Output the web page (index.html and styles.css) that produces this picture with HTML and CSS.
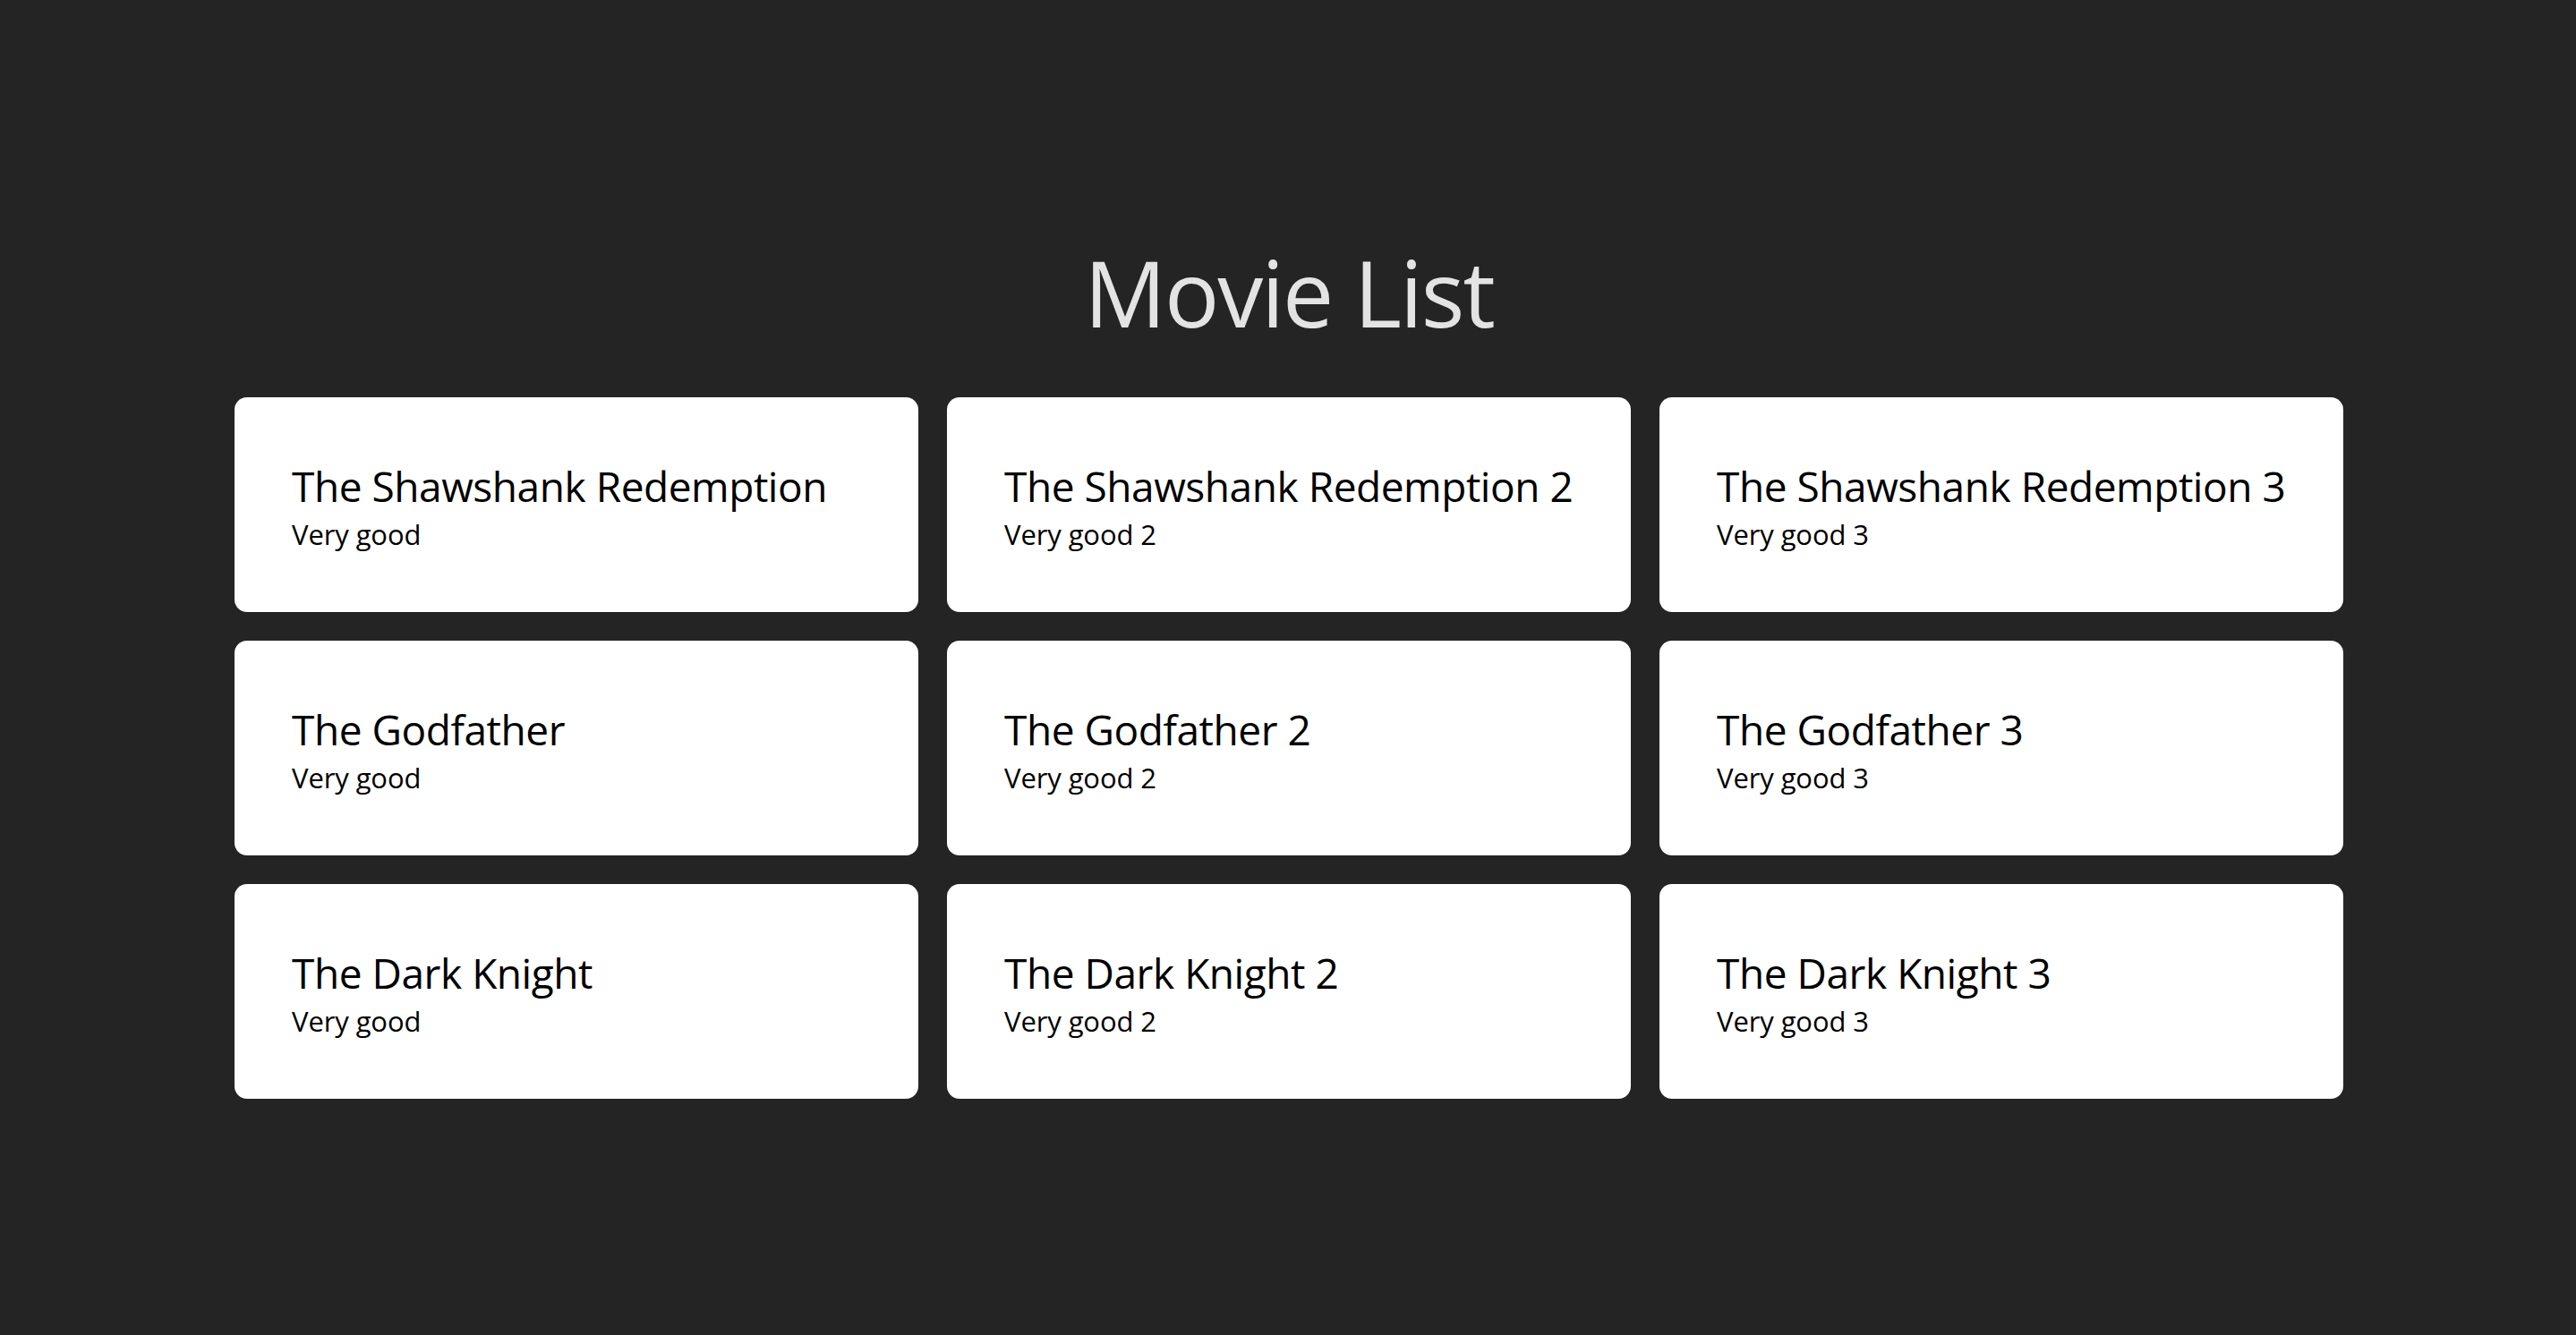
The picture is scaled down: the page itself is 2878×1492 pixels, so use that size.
FILE: index.html
```html
<!DOCTYPE html>
<html lang="en">
<head>
<meta charset="utf-8">
<title>Movie List</title>
<link rel="stylesheet" href="styles.css">
</head>
<body>
<main class="page">
  <h1 class="page-title">Movie List</h1>
  <ul class="movie-grid">
    <li class="movie-card"><h2 class="movie-title">The Shawshank Redemption</h2><p class="movie-desc">Very good</p></li>
    <li class="movie-card"><h2 class="movie-title">The Shawshank Redemption 2</h2><p class="movie-desc">Very good 2</p></li>
    <li class="movie-card"><h2 class="movie-title">The Shawshank Redemption 3</h2><p class="movie-desc">Very good 3</p></li>
    <li class="movie-card"><h2 class="movie-title">The Godfather</h2><p class="movie-desc">Very good</p></li>
    <li class="movie-card"><h2 class="movie-title">The Godfather 2</h2><p class="movie-desc">Very good 2</p></li>
    <li class="movie-card"><h2 class="movie-title">The Godfather 3</h2><p class="movie-desc">Very good 3</p></li>
    <li class="movie-card"><h2 class="movie-title">The Dark Knight</h2><p class="movie-desc">Very good</p></li>
    <li class="movie-card"><h2 class="movie-title">The Dark Knight 2</h2><p class="movie-desc">Very good 2</p></li>
    <li class="movie-card"><h2 class="movie-title">The Dark Knight 3</h2><p class="movie-desc">Very good 3</p></li>
  </ul>
</main>
</body>
</html>
```
FILE: styles.css
```css
html, body {
  margin: 0;
  padding: 0;
}

body {
  background: #242424;
  color: rgba(255, 255, 255, 0.87);
  font-family: "Open Sans", "Noto Sans", sans-serif;
  min-height: 100vh;
}

.page {
  display: flex;
  flex-direction: column;
  align-items: center;
  padding-top: 270px;
  padding-left: 2px;
}

.page-title {
  margin: 0 0 60px;
  font-size: 102px;
  line-height: 114px;
  font-weight: 400;
  letter-spacing: -2px;
  color: #e3e3e3;
}

.movie-grid {
  list-style: none;
  margin: 0;
  padding: 0;
  display: grid;
  grid-template-columns: repeat(3, 764px);
  grid-auto-rows: 240px;
  gap: 32px;
}

.movie-card {
  background: #ffffff;
  border-radius: 14px;
  padding: 66px 64px 0;
  box-sizing: border-box;
  color: #000000;
}

.movie-title {
  margin: 0;
  font-size: 46px;
  line-height: 66px;
  font-weight: 400;
  letter-spacing: -0.45px;
}

.movie-desc {
  margin: 0;
  font-size: 31px;
  line-height: 43px;
  letter-spacing: -0.1px;
}
```
